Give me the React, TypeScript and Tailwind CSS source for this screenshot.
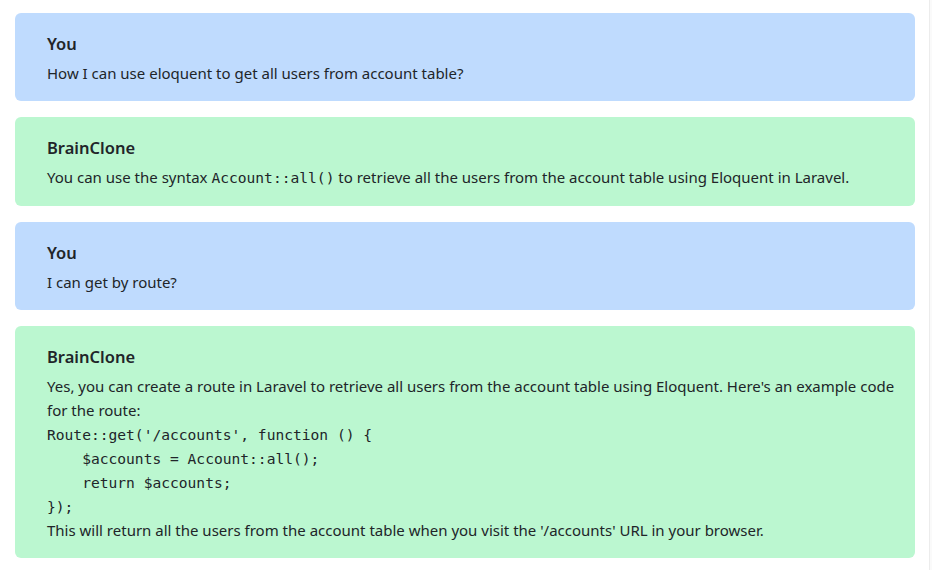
const messages = [
  {
    role: "user",
    name: "You",
    lines: ["How I can use eloquent to get all users from account table?"],
  },
  {
    role: "bot",
    name: "BrainClone",
    lines: ["__inline__"],
  },
  {
    role: "user",
    name: "You",
    lines: ["I can get by route?"],
  },
  {
    role: "bot",
    name: "BrainClone",
    lines: ["__code__"],
  },
]

const code = [
  "Route::get('/accounts', function () {",
  "    $accounts = Account::all();",
  "    return $accounts;",
  "});",
]

function Mono({ children }: { children: React.ReactNode }) {
  return (
    <span className="font-['DejaVu_Sans_Mono',monospace] text-[14.6px] leading-6">
      {children}
    </span>
  )
}

function Body({ kind, text }: { kind: string; text: string }) {
  if (kind === "__inline__") {
    return (
      <p className="leading-6">
        You can use the syntax <Mono>Account::all()</Mono> to retrieve all the users from the account table using Eloquent in Laravel.
      </p>
    )
  }
  if (kind === "__code__") {
    return (
      <div className="leading-6">
        <p>
          Yes, you can create a route in Laravel to retrieve all users from the account table using Eloquent. Here's an example code for the route:
        </p>
        {code.map((line, i) => (
          <div key={i} className="whitespace-pre h-6 leading-6">
            <Mono>{line}</Mono>
          </div>
        ))}
        <p>This will return all the users from the account table when you visit the '/accounts' URL in your browser.</p>
      </div>
    )
  }
  return <p className="leading-6">{text}</p>
}

export default function App() {
  return (
    <div className="flex w-[932px] h-[570px] bg-white overflow-hidden font-['Noto_Sans',sans-serif] text-[#212529]">
      <div className="flex-1 flex flex-col gap-[16.5px] pt-[13px] pl-[15px] pr-[14px]">
        {messages.map((m, i) => (
          <div
            key={i}
            className={
              m.role === "user"
                ? "rounded-md bg-[#bfdbfe] pl-8 pr-4 pt-[17px] pb-[15.5px]"
                : "rounded-md bg-[#bbf7d0] pl-8 pr-4 pt-[17px] pb-[15.5px]"
            }
          >
            <h3 className="text-[16.5px] font-semibold leading-7 mb-[3px]">{m.name}</h3>
            <div className="text-[15px]">
              <Body kind={m.lines[0]} text={m.lines[0]} />
            </div>
          </div>
        ))}
      </div>
      <div className="w-[3px] bg-[#fafafa] border-l border-[#ececec]" />
    </div>
  )
}
